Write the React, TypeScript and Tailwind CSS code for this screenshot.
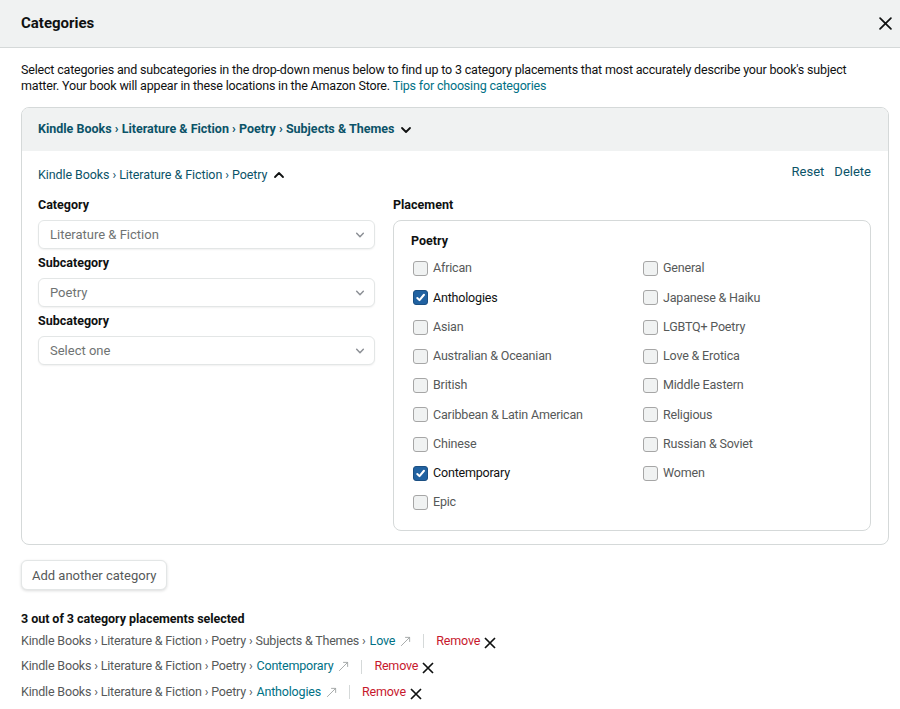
import React from 'react';

const FONT = { fontFamily: 'Roboto, "Noto Sans", Arial, sans-serif' };

const leftItems = [
  { label: 'African', checked: false },
  { label: 'Anthologies', checked: true },
  { label: 'Asian', checked: false },
  { label: 'Australian & Oceanian', checked: false },
  { label: 'British', checked: false },
  { label: 'Caribbean & Latin American', checked: false },
  { label: 'Chinese', checked: false },
  { label: 'Contemporary', checked: true },
  { label: 'Epic', checked: false },
];

const rightItems = [
  { label: 'General', checked: false },
  { label: 'Japanese & Haiku', checked: false },
  { label: 'LGBTQ+ Poetry', checked: false },
  { label: 'Love & Erotica', checked: false },
  { label: 'Middle Eastern', checked: false },
  { label: 'Religious', checked: false },
  { label: 'Russian & Soviet', checked: false },
  { label: 'Women', checked: false },
];

const selected = [
  { path: 'Kindle Books › Literature & Fiction › Poetry › Subjects & Themes ›', leaf: 'Love' },
  { path: 'Kindle Books › Literature & Fiction › Poetry ›', leaf: 'Contemporary' },
  { path: 'Kindle Books › Literature & Fiction › Poetry ›', leaf: 'Anthologies' },
];

const Chevron: React.FC<{ up?: boolean; className?: string }> = ({ up, className }) => (
  <svg className={className} viewBox="0 0 12 12" fill="none" stroke="currentColor" strokeWidth={1.8} strokeLinecap="round" strokeLinejoin="round">
    <path d={up ? 'M2 8l4-4 4 4' : 'M2 4l4 4 4-4'} />
  </svg>
);

const Checkbox: React.FC<{ label: string; checked: boolean }> = ({ label, checked }) => (
  <div className="flex items-center h-[29.25px] pl-[2px]">
    <span
      className={`w-[15px] h-[15px] rounded-[3px] border flex items-center justify-center shrink-0 ${
        checked ? 'bg-[#2162a1] border-[#1b4f82]' : 'bg-[#f0f2f2] border-[#a6a6a6]'
      }`}
    >
      {checked && (
        <svg className="w-[11px] h-[11px] text-white" viewBox="0 0 12 12" fill="none" stroke="currentColor" strokeWidth={2.2} strokeLinecap="round" strokeLinejoin="round">
          <path d="M2.5 6.5l2.4 2.4L9.8 3" />
        </svg>
      )}
    </span>
    <span className={`ml-[5px] text-[12.5px] tracking-[-0.18px] ${checked ? 'text-[#0f1111]' : 'text-[#565959]'}`}>{label}</span>
  </div>
);

const Select: React.FC<{ value: string }> = ({ value }) => (
  <div className="h-[29px] rounded-md border border-[#e3e6e6] bg-white flex items-center justify-between pl-[11px] pr-[9px] shadow-[0_1px_2px_rgba(15,17,17,0.06)]">
    <span className="text-[13px] text-[#6f7373]">{value}</span>
    <Chevron className="w-[10px] h-[10px] text-[#8d9096]" />
  </div>
);

export default function App() {
  return (
    <div className="w-[900px] h-[709px] bg-white overflow-hidden text-[#0f1111]" style={FONT}>
      <div className="h-[48px] bg-[#f0f2f2] border-b border-[#d5d9d9] flex items-center justify-between pl-[21px] pr-[8px]">
        <span className="text-[15px] font-bold">Categories</span>
        <svg className="w-[13px] h-[13px] text-[#0f1111]" viewBox="0 0 12 12" fill="none" stroke="currentColor" strokeWidth={1.6} strokeLinecap="round">
          <path d="M1 1l10 10M11 1L1 11" />
        </svg>
      </div>

      <p className="pl-[21px] pr-[21px] pt-[14px] text-[12.5px] tracking-[-0.18px] leading-[16px] text-[#0f1111]">
        Select categories and subcategories in the drop-down menus below to find up to 3 category placements that most accurately describe your book's subject matter. Your book will appear in these locations in the Amazon Store.{' '}
        <span className="text-[#007185]">Tips for choosing categories</span>
      </p>

      <div className="ml-[21px] mr-[11px] mt-[13px] border border-[#d5d9d9] rounded-lg overflow-hidden">
        <div className="h-[43px] bg-[#f0f2f2] flex items-center px-[16px]">
          <span className="text-[12.5px] font-bold text-[#0b5368]">Kindle Books › Literature &amp; Fiction › Poetry › Subjects &amp; Themes</span>
          <Chevron className="w-[12px] h-[12px] ml-[6px] text-[#0f1111]" />
        </div>

        <div className="pl-[16px] pr-[17px] pt-[16px] pb-[13px]">
          <div className="flex items-center justify-between h-[16px]">
            <div className="flex items-center">
              <span className="text-[12.5px] tracking-[-0.08px] text-[#0b5368]">Kindle Books › Literature &amp; Fiction › Poetry</span>
              <Chevron up className="w-[12px] h-[12px] ml-[6px] text-[#0f1111]" />
            </div>
            <div className="flex gap-[10px] text-[13px] text-[#0b5368] -mt-[6px]">
              <span>Reset</span>
              <span>Delete</span>
            </div>
          </div>

          <div className="flex gap-[18px] mt-[14px]">
            <div className="w-[337px] shrink-0">
              <div className="text-[12.5px] font-bold leading-[16px]">Category</div>
              <div className="mt-[7px]"><Select value="Literature & Fiction" /></div>
              <div className="text-[12.5px] font-bold leading-[16px] mt-[6px]">Subcategory</div>
              <div className="mt-[7px]"><Select value="Poetry" /></div>
              <div className="text-[12.5px] font-bold leading-[16px] mt-[6px]">Subcategory</div>
              <div className="mt-[7px]"><Select value="Select one" /></div>
            </div>

            <div className="flex-1">
              <div className="text-[12.5px] font-bold leading-[16px]">Placement</div>
              <div className="mt-[7px] border border-[#d5d9d9] rounded-lg pl-[17px] pr-[17px] pt-[12px] pb-[13px]">
                <div className="text-[12.5px] font-bold leading-[16px]">Poetry</div>
                <div className="grid grid-cols-[230px_1fr] mt-[5px]">
                  <div>
                    {leftItems.map((it) => (
                      <Checkbox key={it.label} label={it.label} checked={it.checked} />
                    ))}
                  </div>
                  <div>
                    {rightItems.map((it) => (
                      <Checkbox key={it.label} label={it.label} checked={it.checked} />
                    ))}
                  </div>
                </div>
              </div>
            </div>
          </div>
        </div>
      </div>

      <div className="px-[21px] mt-[15px]">
        <button className="h-[30px] px-[10px] rounded-md border border-[#e3e6e6] bg-white text-[13px] text-[#565959] shadow-[0_1px_3px_rgba(15,17,17,0.15)]">
          Add another category
        </button>
      </div>

      <div className="px-[21px] mt-[21px]">
        <div className="text-[12.5px] font-bold leading-[16px] tracking-[-0.05px]">3 out of 3 category placements selected</div>
        <div className="mt-[1px]">
          {selected.map((s, i) => (
            <div key={i} className="flex items-center h-[25.5px] text-[12.5px] tracking-[-0.18px]">
              <span className="text-[#565959]">{s.path}</span>
              <span className="text-[#007185] ml-[4px]">{s.leaf}</span>
              <svg className="w-[11px] h-[11px] ml-[5px] text-[#a0a4a4]" viewBox="0 0 12 12" fill="none" stroke="currentColor" strokeWidth={1} strokeLinecap="round">
                <path d="M1.5 10.5L10.5 1.5M6 1.5h4.5V6" />
              </svg>
              <span className="w-px h-[14px] bg-[#d5d9d9] ml-[12px]" />
              <span className="text-[#c7182d] ml-[12px]">Remove</span>
              <svg className="w-[12px] h-[12px] ml-[4px] mt-[3px] text-[#0f1111]" viewBox="0 0 12 12" fill="none" stroke="currentColor" strokeWidth={1.7}>
                <path d="M1 1l10 10M11 1L1 11" />
              </svg>
            </div>
          ))}
        </div>
      </div>
    </div>
  );
}
